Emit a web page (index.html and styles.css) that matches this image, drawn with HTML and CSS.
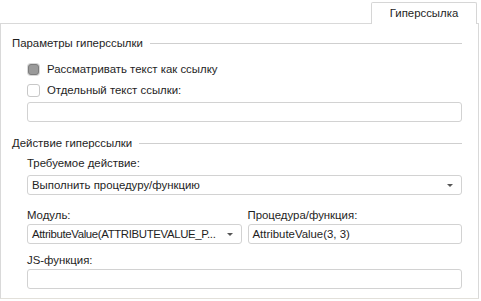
FILE: index.html
```html
<!DOCTYPE html>
<html lang="ru">
<head>
  <meta charset="UTF-8">
  <title>Гиперссылка</title>
  <link rel="stylesheet" href="styles.css">
</head>
<body>

<div class="tabs">
  <div class="tab">Гиперссылка</div>
</div>

<div class="panel">
  <div class="group-title"><span>Параметры гиперссылки</span></div>

  <div class="indent">
    <label class="check-row"><span class="check checked"></span>Рассматривать текст как ссылку</label>
    <label class="check-row second"><span class="check"></span>Отдельный текст ссылки:</label>
    <div class="field first-field"></div>
  </div>

  <div class="group-title second-group"><span>Действие гиперссылки</span></div>

  <div class="indent">
    <div class="label">Требуемое действие:</div>
    <div class="field select">
      <span class="value">Выполнить процедуру/функцию</span>
      <span class="arrow"></span>
    </div>

    <div class="columns">
      <div class="col">
        <div class="label">Модуль:</div>
        <div class="field select">
          <span class="value tight">AttributeValue(ATTRIBUTEVALUE_P...</span>
          <span class="arrow"></span>
        </div>
      </div>
      <div class="col">
        <div class="label">Процедура/функция:</div>
        <div class="field"><span class="value">AttributeValue(3, 3)</span></div>
      </div>
    </div>

    <div class="label">JS-функция:</div>
    <div class="field"></div>
  </div>
</div>

</body>
</html>
```

FILE: styles.css
```css
body {
  margin: 0;
  width: 481px;
  font-family: 'Liberation Sans', Arial, sans-serif;
  font-size: 11.4px;
  color: #1e1e1e;
  background: #fff;
}
.tabs {
  display: flex;
  justify-content: flex-end;
  height: 23px;
  padding-right: 4px;
  box-sizing: border-box;
}
.tab {
  width: 104px;
  margin-top: 1px;
  border: 1px solid #d6d6d6;
  border-bottom: none;
  border-radius: 2px 2px 0 0;
  text-align: center;
  line-height: 21px;
  background: #fff;
  position: relative;
  top: 1px;
}
.panel {
  width: 479px;
  height: 276px;
  box-sizing: border-box;
  border: 1px solid #d9d9d9;
  border-bottom-color: #e2e0da;
  padding: 11px 16px 0 11px;
}
.group-title {
  display: flex;
  align-items: center;
  gap: 7px;
  line-height: 16px;
}
.group-title::after {
  content: "";
  flex: 1;
  height: 1px;
  background: #cfcfcf;
}
.second-group {
  margin-top: 13px;
}
.indent {
  padding-left: 15px;
}
.check-row {
  display: flex;
  align-items: center;
  gap: 7px;
  line-height: 16px;
  margin-top: 10px;
}
.check-row.second {
  margin-top: 5px;
}
.check {
  width: 11px;
  height: 11px;
  border: 1px solid #c8c8c8;
  border-radius: 3px;
  background: #fff;
  box-sizing: content-box;
}
.check.checked {
  background: #9a9a9a;
  border-color: #7d7d7d;
  box-shadow: 0 0 0 1px #d8d8d8;
  width: 9px;
  height: 9px;
  margin: 1px;
}
.field {
  height: 20px;
  box-sizing: border-box;
  border: 1px solid #d2d2d2;
  border-radius: 3px;
  background: #fff;
  display: flex;
  align-items: center;
  padding: 0 4px;
  margin-top: 4px;
}
.label {
  line-height: 16px;
  margin-top: 4px;
}
.select {
  justify-content: space-between;
  gap: 6px;
}
.value {
  white-space: nowrap;
}
.value.tight {
  letter-spacing: -0.35px;
}
.arrow {
  width: 0;
  height: 0;
  border-left: 3px solid transparent;
  border-right: 3px solid transparent;
  border-top: 3px solid #555;
  margin-right: 4px;
  flex-shrink: 0;
}
.columns {
  display: flex;
  gap: 6px;
  margin-top: 12px;
}
.col {
  flex: 1 1 0;
  min-width: 0;
}
.col .label {
  margin-top: 0;
}
.col .field {
  margin-top: 1px;
}
.columns + .label {
  margin-top: 8px;
}
.columns + .label + .field {
  margin-top: 1px;
}
```
